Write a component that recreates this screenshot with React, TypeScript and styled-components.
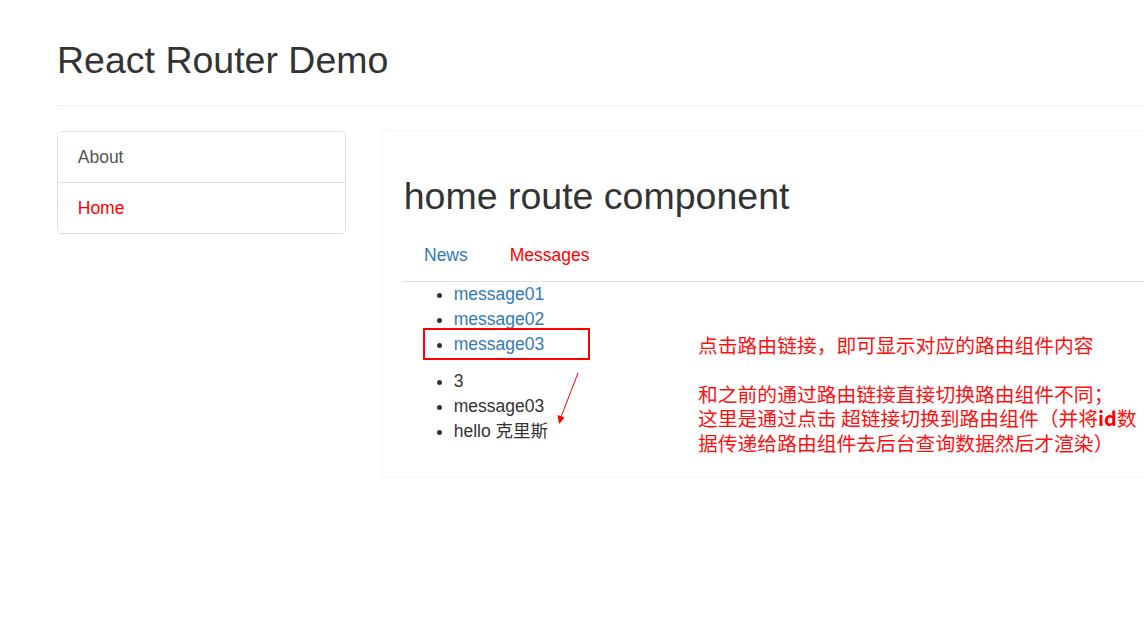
import React from "react";
import styled, { createGlobalStyle } from "styled-components";

const Global = createGlobalStyle`
  html, body {
    margin: 0;
    padding: 0;
    background: #fff;
    overflow: hidden;
  }
  body {
    font-family: "Liberation Sans", Arial, "Noto Sans CJK SC", sans-serif;
    font-size: 17.5px;
    line-height: 25px;
    color: #333;
  }
  * { box-sizing: border-box; }
`;

const Page = styled.div`
  width: 1220px;
  padding: 39.5px 0 0 57px;
`;

const PageHeader = styled.div`
  padding-bottom: 24.25px;
  border-bottom: 1px solid #eee;
  margin-bottom: 25px;
`;

const Title = styled.h2`
  margin: 0;
  font-size: 37.5px;
  line-height: 41.25px;
  font-weight: 500;
  color: #333;
`;

const Row = styled.div`
  display: flex;
  align-items: flex-start;
  gap: 36px;
`;

const ListGroup = styled.div`
  width: 289px;
  display: flex;
  flex-direction: column;
  border: 1px solid #ddd;
  border-radius: 5px;
  overflow: hidden;
`;

const ListItem = styled.a<{ $active?: boolean }>`
  display: block;
  padding: 12.5px 18.75px 12.5px 19.75px;
  line-height: 25px;
  color: ${(p) => (p.$active ? "#ff0000" : "#555")};
  text-decoration: none;
  background: #fff;
  & + & {
    border-top: 1px solid #ddd;
  }
`;

const Main = styled.div`
  flex: 1;
  margin-top: -1px;
`;

const Panel = styled.div`
  position: relative;
  background: #fff;
  border: 1px solid #f5f5f5;
  border-radius: 5px;
  box-shadow: 0 1px 1.5px rgba(0, 0, 0, 0.05);
`;

const PanelBody = styled.div`
  padding: 19.75px 18.75px 20.5px 20.75px;
`;

const Heading = styled.h2`
  margin: 25px 0 12.5px;
  font-size: 37.5px;
  line-height: 41.25px;
  font-weight: 500;
  color: #333;
`;

const Tabs = styled.ul`
  display: flex;
  list-style: none;
  margin: 0 0 0 -0.5px;
  padding: 0;
  border-bottom: 1px solid #ddd;
`;

const Tab = styled.li`
  margin-bottom: -1px;
`;

const TabLink = styled.a<{ $active?: boolean }>`
  display: block;
  padding: 12.5px 18.75px 12.5px 19.75px;
  margin-right: 1.5px;
  border: 1px solid transparent;
  line-height: 25px;
  color: ${(p) => (p.$active ? "#ff0000" : "#337ab7")};
  text-decoration: none;
`;

const List = styled.ul`
  margin: 0 0 12.5px;
  padding-left: 50px;
  line-height: 25px;
`;

const Item = styled.li`
  position: relative;
`;

const Link = styled.a`
  color: #337ab7;
  text-decoration: none;
`;

const Highlight = styled.span`
  position: absolute;
  left: -31px;
  top: -3.5px;
  width: 167px;
  height: 31.5px;
  border: 2px solid #ff0000;
  pointer-events: none;
`;

const Arrow = styled.svg`
  position: absolute;
  left: 168px;
  top: 235px;
  overflow: visible;
`;

const Note = styled.div`
  position: absolute;
  left: 315px;
  top: 201.5px;
  font-family: "Noto Sans CJK SC", sans-serif;
  font-size: 19.8px;
  line-height: 24.5px;
  color: #ff1010;
  white-space: pre;
  font-weight: 400;
`;

const NoteLine = styled.div`
  height: 24.5px;
`;

const Id = styled.span`
  font-family: "Noto Sans CJK SC", sans-serif;
  font-weight: 700;
  color: #ff0000;
`;

export default function App() {
  return (
    <>
      <Global />
      <Page>
        <PageHeader>
          <Title>React Router Demo</Title>
        </PageHeader>
        <Row>
          <ListGroup>
            <ListItem href="#">About</ListItem>
            <ListItem href="#" $active>
              Home
            </ListItem>
          </ListGroup>
          <Main>
            <Panel>
              <PanelBody>
                <Heading>home route component</Heading>
                <Tabs>
                  <Tab>
                    <TabLink href="#">News</TabLink>
                  </Tab>
                  <Tab>
                    <TabLink href="#" $active>
                      Messages
                    </TabLink>
                  </Tab>
                </Tabs>
                <List>
                  <Item>
                    <Link href="#">message01</Link>
                  </Item>
                  <Item>
                    <Link href="#">message02</Link>
                  </Item>
                  <Item>
                    <Link href="#">message03</Link>
                    <Highlight />
                  </Item>
                </List>
                <List>
                  <Item>3</Item>
                  <Item>message03</Item>
                  <Item>hello 克里斯</Item>
                </List>
              </PanelBody>
              <Arrow width="20" height="65" viewBox="0 0 20 65">
                <line x1="27" y1="7" x2="10" y2="51" stroke="#ff0000" strokeWidth="1" />
                <polygon points="8,58 6.5,49 13.5,51.5" fill="#ff0000" />
              </Arrow>
              <Note>
                <NoteLine>点击路由链接，即可显示对应的路由组件内容</NoteLine>
                <NoteLine />
                <NoteLine>和之前的通过路由链接直接切换路由组件不同；</NoteLine>
                <NoteLine>
                  这里是通过点击 超链接切换到路由组件（并将<Id>id</Id>数
                </NoteLine>
                <NoteLine>据传递给路由组件去后台查询数据然后才渲染）</NoteLine>
              </Note>
            </Panel>
          </Main>
        </Row>
      </Page>
    </>
  );
}
